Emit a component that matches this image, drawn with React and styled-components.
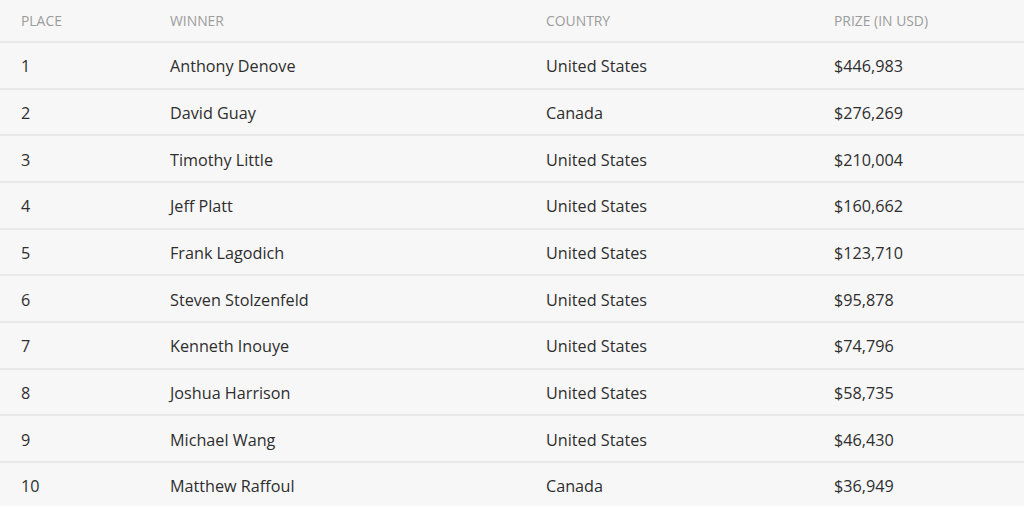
import React from "react";
import styled, { createGlobalStyle } from "styled-components";

const GlobalStyle = createGlobalStyle`
  html, body {
    margin: 0;
    padding: 0;
    background: #f7f7f7;
  }
  body {
    font-family: "Open Sans", "Liberation Sans", sans-serif;
  }
`;

const results = [
  { place: 1, winner: "Anthony Denove", country: "United States", prize: "$446,983" },
  { place: 2, winner: "David Guay", country: "Canada", prize: "$276,269" },
  { place: 3, winner: "Timothy Little", country: "United States", prize: "$210,004" },
  { place: 4, winner: "Jeff Platt", country: "United States", prize: "$160,662" },
  { place: 5, winner: "Frank Lagodich", country: "United States", prize: "$123,710" },
  { place: 6, winner: "Steven Stolzenfeld", country: "United States", prize: "$95,878" },
  { place: 7, winner: "Kenneth Inouye", country: "United States", prize: "$74,796" },
  { place: 8, winner: "Joshua Harrison", country: "United States", prize: "$58,735" },
  { place: 9, winner: "Michael Wang", country: "United States", prize: "$46,430" },
  { place: 10, winner: "Matthew Raffoul", country: "Canada", prize: "$36,949" },
];

const Table = styled.div`
  width: 1024px;
  background: #f7f7f7;
`;

const Row = styled.div`
  display: grid;
  grid-template-columns: 149px 376px 288px 1fr;
  align-items: center;
  box-sizing: border-box;
  height: ${(p) => (p.$head ? "43px" : "46.67px")};
  padding-left: 21px;
  border-bottom: 2px solid #e9e9e9;
  padding-top: ${(p) => (p.$head ? "0" : "2px")};
`;

const HeadCell = styled.div`
  font-size: 13.9px;
  color: #9c9c9c;
  text-transform: uppercase;
`;

const Cell = styled.div`
  font-size: 16.2px;
  color: #2e2e2e;
`;

export default function App() {
  return (
    <>
      <GlobalStyle />
      <Table>
        <Row $head>
          <HeadCell>Place</HeadCell>
          <HeadCell>Winner</HeadCell>
          <HeadCell>Country</HeadCell>
          <HeadCell>Prize (in USD)</HeadCell>
        </Row>
        {results.map((r) => (
          <Row key={r.place}>
            <Cell>{r.place}</Cell>
            <Cell>{r.winner}</Cell>
            <Cell>{r.country}</Cell>
            <Cell>{r.prize}</Cell>
          </Row>
        ))}
      </Table>
    </>
  );
}
